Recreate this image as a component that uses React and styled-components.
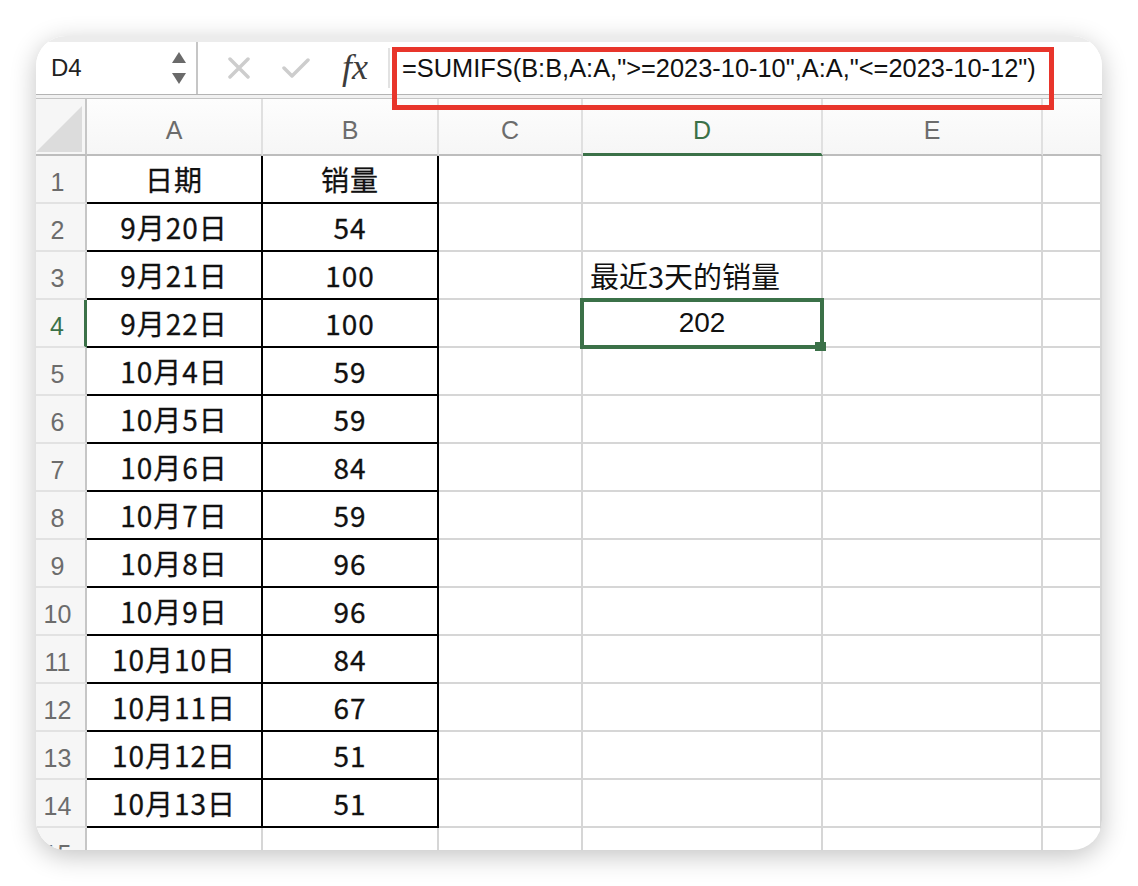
import styled, { createGlobalStyle } from "styled-components";

const GlobalStyle = createGlobalStyle`
  body {
    margin: 0;
    background: #fff;
  }
`;

const green = "#3b7148";
const gridLine = "#d6d6d6";

const Page = styled.div`
  width: 1138px;
  height: 886px;
  padding: 36px;
  box-sizing: border-box;
`;

const Window = styled.div`
  position: relative;
  width: 1066px;
  height: 814px;
  border-radius: 30px;
  overflow: hidden;
  background: #fff;
  box-shadow: 0 6px 26px rgba(0, 0, 0, 0.24);
`;

const Toolbar = styled.div`
  display: flex;
  align-items: center;
  height: 52px;
  border-top: 6px solid #ececec;
  background: #fff;
`;

const ToolbarEdge = styled.div`
  height: 3px;
  border-top: 1px solid #b4b4b4;
  border-bottom: 1px solid #c4c4c4;
  background: #f1f1f1;
`;

const NameBox = styled.div`
  display: flex;
  align-items: center;
  justify-content: space-between;
  width: 162px;
  height: 100%;
  box-sizing: border-box;
  padding: 0 10px 0 15px;
  border-right: 2px solid #c6c6c6;
  font-family: "Liberation Sans", Arial, sans-serif;
  font-size: 24px;
  color: #222;
`;

const Stepper = styled.div`
  display: flex;
  flex-direction: column;
  gap: 10px;
`;

const Triangle = styled.div`
  width: 0;
  height: 0;
  border-left: 7px solid transparent;
  border-right: 7px solid transparent;
  ${(p) => (p.$down ? "border-top" : "border-bottom")}: 11px solid #6a6a6a;
`;

const Controls = styled.div`
  display: flex;
  align-items: center;
  gap: 32px;
  padding-left: 30px;
  height: 100%;
`;

const Fx = styled.span`
  font-family: "Liberation Serif", "Times New Roman", serif;
  font-style: italic;
  font-size: 36px;
  color: #3c3c3c;
  margin-top: -3px;
`;

const Divider = styled.div`
  width: 2px;
  height: 40px;
  margin-left: -12px;
  background: #e2e2e2;
`;

const Formula = styled.div`
  margin-left: 12px;
  font-family: "Liberation Sans", Arial, sans-serif;
  font-size: 25.4px;
  color: #111;
  white-space: nowrap;
`;

const Highlight = styled.div`
  position: absolute;
  left: 356px;
  top: 11px;
  width: 662px;
  height: 63px;
  box-sizing: border-box;
  border: 5px solid #e8352b;
  pointer-events: none;
  z-index: 5;
`;

const Sheet = styled.div`
  display: grid;
  grid-template-columns: 51px 176px 176px 144px 240px 220px 59px;
  grid-template-rows: 57px;
  grid-auto-rows: 48px;
`;

const Corner = styled.div`
  box-sizing: border-box;
  background: #f6f6f6;
  border-right: 2px solid #c6c6c6;
  border-bottom: 2px solid #bdbdbd;
  display: flex;
  align-items: flex-end;
  justify-content: flex-end;
  padding: 0 3px 2px 0;
`;

const ColHeader = styled.div`
  box-sizing: border-box;
  display: flex;
  align-items: center;
  justify-content: center;
  padding-top: 8px;
  background: linear-gradient(#fdfdfd, #f6f6f6);
  border-right: 2px solid #e0e0e0;
  border-bottom: ${(p) => (p.$active ? `3px solid ${green}` : "2px solid #bdbdbd")};
  font-family: "Liberation Sans", Arial, sans-serif;
  font-size: 25px;
  color: ${(p) => (p.$active ? green : "#6c6c6c")};
`;

const RowHeader = styled.div`
  box-sizing: border-box;
  display: flex;
  align-items: center;
  justify-content: center;
  padding: 6px 6px 0 0;
  background: #f6f6f6;
  border-right: ${(p) => (p.$active ? `3px solid ${green}` : "2px solid #c6c6c6")};
  border-bottom: 2px solid #e2e2e2;
  font-family: "Liberation Sans", Arial, sans-serif;
  font-size: 25px;
  color: ${(p) => (p.$active ? green : "#6c6c6c")};
`;

const Cell = styled.div`
  position: relative;
  box-sizing: border-box;
  display: flex;
  align-items: center;
  justify-content: ${(p) => (p.$left ? "flex-start" : "center")};
  padding-left: ${(p) => (p.$left ? "7px" : "0")};
  border-right: 2px solid ${(p) => (p.$boxed ? "#000" : gridLine)};
  border-bottom: 2px solid ${(p) => (p.$boxed ? "#000" : gridLine)};
  font-family: ${(p) =>
    p.$latin
      ? `"Liberation Sans", Arial, sans-serif`
      : `"Noto Sans CJK SC", "Noto Sans", sans-serif`};
  font-size: ${(p) => (p.$left ? "29px" : "28px")};
  letter-spacing: ${(p) => (p.$boxed ? "1px" : "0")};
  -webkit-text-stroke: ${(p) => (p.$boxed ? "0.3px #111" : "0")};
  color: #111;
  white-space: nowrap;
`;

const Selection = styled.div`
  position: absolute;
  left: -3px;
  top: -2px;
  right: -3px;
  bottom: -3px;
  border: 4px solid ${green};
  z-index: 2;
`;

const FillHandle = styled.div`
  position: absolute;
  right: -5px;
  bottom: -5px;
  width: 11px;
  height: 9px;
  background: ${green};
  z-index: 3;
`;

const columns = ["A", "B", "C", "D", "E", ""];

const rows = [
  ["日期", "销量"],
  ["9月20日", "54"],
  ["9月21日", "100"],
  ["9月22日", "100"],
  ["10月4日", "59"],
  ["10月5日", "59"],
  ["10月6日", "84"],
  ["10月7日", "59"],
  ["10月8日", "96"],
  ["10月9日", "96"],
  ["10月10日", "84"],
  ["10月11日", "67"],
  ["10月12日", "51"],
  ["10月13日", "51"],
  ["", ""],
];

const CrossIcon = () => (
  <svg width="22" height="22" viewBox="0 0 22 22">
    <path d="M2 2 L20 20 M20 2 L2 20" stroke="#cdcdcd" strokeWidth="3.5" strokeLinecap="round" />
  </svg>
);

const CheckIcon = () => (
  <svg width="28" height="22" viewBox="0 0 28 22">
    <path d="M2 11 L10 19 L26 3" stroke="#cdcdcd" strokeWidth="3.5" fill="none" strokeLinecap="round" strokeLinejoin="round" />
  </svg>
);

const SelectAll = () => (
  <svg width="46" height="46" viewBox="0 0 46 46">
    <polygon points="0,46 46,46 46,0" fill="#dcdcdc" />
  </svg>
);

const App = () => {
  return (
    <Page>
      <GlobalStyle />
      <Window>
        <Toolbar>
          <NameBox>
            D4
            <Stepper>
              <Triangle />
              <Triangle $down />
            </Stepper>
          </NameBox>
          <Controls>
            <CrossIcon />
            <CheckIcon />
            <Fx>fx</Fx>
            <Divider />
          </Controls>
          <Formula>=SUMIFS(B:B,A:A,"&gt;=2023-10-10",A:A,"&lt;=2023-10-12")</Formula>
        </Toolbar>
        <ToolbarEdge />
        <Highlight />
        <Sheet>
          <Corner>
            <SelectAll />
          </Corner>
          {columns.map((c, i) => (
            <ColHeader key={i} $active={c === "D"}>
              {c}
            </ColHeader>
          ))}
          {rows.map(([date, qty], i) => {
            const n = i + 1;
            const boxed = n <= 14;
            return [
              <RowHeader key={`h${n}`} $active={n === 4}>
                {n}
              </RowHeader>,
              <Cell key={`a${n}`} $boxed={boxed}>{date}</Cell>,
              <Cell key={`b${n}`} $boxed={boxed}>{qty}</Cell>,
              <Cell key={`c${n}`} />,
              n === 3 ? (
                <Cell key={`d${n}`} $left>最近3天的销量</Cell>
              ) : n === 4 ? (
                <Cell key={`d${n}`} $latin>
                  202
                  <Selection />
                  <FillHandle />
                </Cell>
              ) : (
                <Cell key={`d${n}`} />
              ),
              <Cell key={`e${n}`} />,
              <Cell key={`f${n}`} />,
            ];
          })}
        </Sheet>
      </Window>
    </Page>
  );
};

export default App;
